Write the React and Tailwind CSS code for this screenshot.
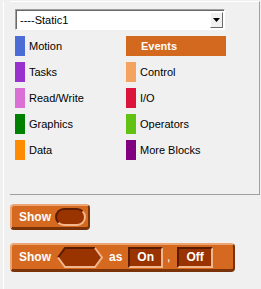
import React from "react";

const leftCats = [
  { name: "Motion", color: "bg-[#4a6cd4]" },
  { name: "Tasks", color: "bg-[#9932cc]" },
  { name: "Read/Write", color: "bg-[#da70d6]" },
  { name: "Graphics", color: "bg-[#008000]" },
  { name: "Data", color: "bg-[#ff8c00]" },
];

const rightCats = [
  { name: "Events", color: "bg-[#d2691e]", selected: true },
  { name: "Control", color: "bg-[#f4a460]" },
  { name: "I/O", color: "bg-[#dc143c]" },
  { name: "Operators", color: "bg-[#62c213]" },
  { name: "More Blocks", color: "bg-[#800080]" },
];

function Category({ cat }) {
  if (cat.selected) {
    return (
      <div className="h-[20px] w-[100px] bg-[#d2691e] flex items-center pl-[15px]">
        <span className="text-white font-bold">{cat.name}</span>
      </div>
    );
  }
  return (
    <div className="h-[20px] flex items-center">
      <div className={"w-[10px] h-[20px] " + cat.color} />
      <span className="ml-[4px] text-[#000]">{cat.name}</span>
    </div>
  );
}

function Block({ children, className }) {
  return (
    <div
      className={
        "inline-flex items-center bg-[#d4691f] rounded-[4px] border-t-[2px] border-l-[2px] border-b-[3px] border-r-[2px] border-t-[#eba472] border-l-[#eba472] border-b-[#7a3209] border-r-[#7a3209] " +
        className
      }
    >
      {children}
    </div>
  );
}

function BoxSlot({ label }) {
  return (
    <div className="h-[21px] px-[7px] flex items-center bg-[#993300] border-t-[2px] border-l-[2px] border-b-[2px] border-r-[2px] border-t-[#5a1c00] border-l-[#5a1c00] border-b-[#f2b68c] border-r-[#f2b68c]">
      <span className="text-white font-bold">{label}</span>
    </div>
  );
}

function HexSlot() {
  return (
    <svg width="46" height="21" viewBox="0 0 46 21" className="block">
      <polygon points="8,1 38,1 45,10.5 38,20 8,20 1,10.5" fill="#993300" />
      <polyline points="1,10.5 8,1 38,1" fill="none" stroke="#5a1c00" strokeWidth="2" />
      <polyline points="38,1 45,10.5 38,20 8,20 1,10.5" fill="none" stroke="#f2b68c" strokeWidth="2" />
    </svg>
  );
}

export default function App() {
  return (
    <div className="w-[261px] h-[289px] bg-[#f0f0f0] flex pt-[1px] text-[11px] font-['Liberation_Sans',Arial,sans-serif] overflow-hidden">
      <div className="w-[3px]" />
      <div className="flex-1 border-l border-white pl-[6px]">
        <div className="w-[250px] h-[194px] border-t border-t-white border-r border-r-[#a0a0a0] border-b border-b-[#a0a0a0] pt-[7px] pl-[5px]">
          <div className="w-[210px] h-[21px] flex border border-t-[#a0a0a0] border-l-[#a0a0a0] border-b-white border-r-white">
            <div className="flex-1 flex border-t border-l border-[#696969] bg-white">
              <span className="flex-1 pl-[3px] leading-[18px] text-black">----Static1</span>
              <div className="w-[13px] m-[1px] flex items-center justify-center bg-[#f0f0f0] border border-t-white border-l-white border-b-[#696969] border-r-[#696969]">
                <svg width="7" height="4" viewBox="0 0 7 4">
                  <polygon points="0,0 7,0 3.5,4" fill="#000" />
                </svg>
              </div>
            </div>
          </div>
          <div className="mt-[6px] grid grid-cols-[111px_100px] gap-y-[6px]">
            {leftCats.map((c, i) => (
              <React.Fragment key={c.name}>
                <Category cat={c} />
                <Category cat={rightCats[i]} />
              </React.Fragment>
            ))}
          </div>
        </div>
        <div className="mt-[9px] flex flex-col items-start gap-[13px] text-white font-bold text-[12px]">
          <Block className="h-[26px] pl-[7px] pr-[2px]">
            <span>Show</span>
            <div className="ml-[4px] w-[31px] h-[18px] rounded-full bg-[#993300] border-t-[2px] border-l-[2px] border-b-[2px] border-r-[2px] border-t-[#5a1c00] border-l-[#5a1c00] border-b-[#f2b68c] border-r-[#f2b68c]" />
          </Block>
          <Block className="h-[29px] pl-[7px] pr-[20px]">
            <span>Show</span>
            <div className="ml-[6px]">
              <HexSlot />
            </div>
            <span className="ml-[6px]">as</span>
            <div className="ml-[6px]">
              <BoxSlot label="On" />
            </div>
            <span className="ml-[4px] mr-[7px] font-normal">,</span>
            <BoxSlot label="Off" />
          </Block>
        </div>
      </div>
    </div>
  );
}
